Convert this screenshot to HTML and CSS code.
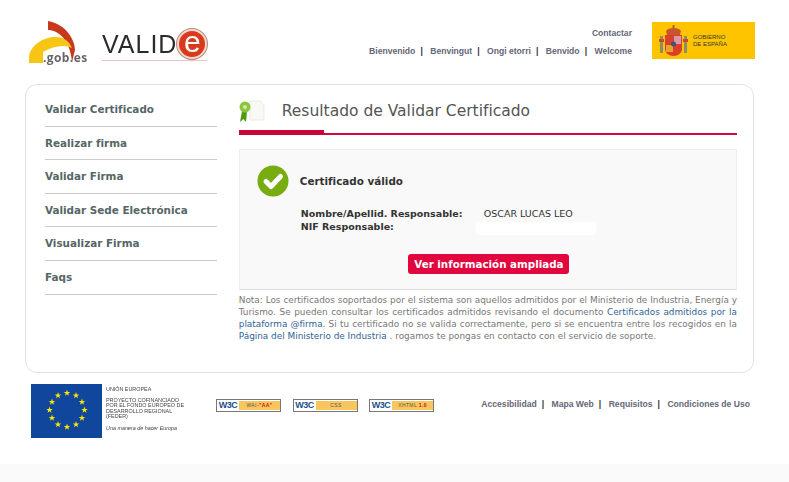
FILE: index.html

```html
<!DOCTYPE html>
<html lang="es">
<head>
  <meta charset="UTF-8" />
  <meta name="viewport" content="width=device-width, initial-scale=1.0" />
  <title>VALIDe</title>
  <link rel="stylesheet" href="styles.css">
</head>
<body>
  <div class="header">
    <div class="logos">
      <div class="gob-logo">
        <svg class="gob-mark" width="48" height="46" viewBox="0 0 48 46">
          <path d="M19 1 C37 4 46 20 46 30 L43 42 C42 28 35 11 19 10 Z" fill="#c8391b"/>
          <path d="M0 43 V36 C2 25 14 17 27 17 C35 17 40 21 43 28 C36 24 24 26 14 32 L14 43 Z" fill="#f7c615"/>
        </svg>
        <span class="gob-text">.gob.es</span>
      </div>
      <div class="valide-logo">
        <span class="valide-text">VALID</span>
        <span class="valide-e">e</span>
      </div>
    </div>
    <div class="lang-links">
      <div class="lang-row"><a href="#">Contactar</a></div>
      <div class="lang-row">
        <a href="#">Bienvenido</a><span class="sep">|</span>
        <a href="#">Benvingut</a><span class="sep">|</span>
        <a href="#">Ongi etorri</a><span class="sep">|</span>
        <a href="#">Benvido</a><span class="sep">|</span>
        <a href="#">Welcome</a>
      </div>
    </div>
    <div class="gobierno">
      <svg width="30" height="32" viewBox="0 0 30 32">
        <rect x="1" y="11" width="3" height="17" fill="#8a8f6a"/>
        <rect x="25" y="11" width="3" height="17" fill="#8a8f6a"/>
        <rect x="0" y="14" width="5" height="3" fill="#d2452d"/>
        <rect x="24" y="14" width="5" height="3" fill="#d2452d"/>
        <path d="M7 6 C9 2 20 2 22 6 L21 10 H8 Z" fill="#c9552c"/>
        <rect x="13.5" y="0" width="2" height="4" fill="#a8642a"/>
        <path d="M6 10 H23 V24 C23 28 19 31 14.5 31 C10 31 6 28 6 24 Z" fill="#d8402a"/>
        <rect x="15" y="11" width="7" height="8" fill="#d79aa8"/>
        <rect x="7" y="20" width="7" height="7" fill="#e8a12c"/>
        <circle cx="14.5" cy="19" r="2.5" fill="#44507a"/>
      </svg>
      <div class="gobierno-text">GOBIERNO<br>DE ESPAÑA</div>
    </div>
  </div>

  <div class="main-box">
    <ul class="side-menu">
      <li><a href="#">Validar Certificado</a></li>
      <li><a href="#">Realizar firma</a></li>
      <li><a href="#">Validar Firma</a></li>
      <li><a href="#">Validar Sede Electrónica</a></li>
      <li><a href="#">Visualizar Firma</a></li>
      <li><a href="#">Faqs</a></li>
    </ul>

    <div class="content">
      <div class="title-row">
        <svg width="26" height="23" viewBox="0 0 26 23">
          <path d="M11 1 H21 L25 5 V20 H11 Z" fill="#f8f8f4" stroke="#ebebe4" stroke-width="1"/>
          <path d="M3 11 L1 22 L4.500 19 L7 22 L8 11 Z" fill="#4f9a12"/>
          <circle cx="6" cy="7" r="5.500" fill="#8cc63f"/>
          <circle cx="6" cy="7" r="2" fill="#d5eaa6"/>
        </svg>
        <h1>Resultado de Validar Certificado</h1>
      </div>
      <div class="title-rule"><span class="title-tab"></span></div>

      <div class="panel">
        <div class="status">
          <svg width="32" height="32" viewBox="0 0 32 32">
            <circle cx="16" cy="16" r="15.500" fill="#77ad10"/>
            <path d="M9 16.500 L14 21.500 L23.500 11.500" fill="none" stroke="#fff" stroke-width="5" stroke-linejoin="round" stroke-linecap="round"/>
          </svg>
          <strong>Certificado válido</strong>
        </div>
        <div class="data-grid">
          <span class="data-label">Nombre/Apellid. Responsable:</span><span class="data-value">OSCAR LUCAS LEO</span>
          <span class="data-label">NIF Responsable:</span><span class="data-value"><span class="redacted"></span></span>
        </div>
        <div class="actions">
          <button class="more-btn">Ver información ampliada</button>
        </div>
      </div>

      <p class="note">Nota: Los certificados soportados por el sistema son aquellos admitidos por el Ministerio de Industria, Energía y Turismo. Se pueden consultar los certificados admitidos revisando el documento <a href="#">Certificados admitidos por la plataforma @firma.</a> Si tu certificado no se valida correctamente, pero si se encuentra entre los recogidos en la <a href="#">Página del Ministerio de Industria</a> . rogamos te pongas en contacto con el servicio de soporte.</p>
    </div>
  </div>

  <div class="footer">
    <div class="eu-block">
      <svg class="eu-flag" width="71" height="54" viewBox="0 0 71 54">
        <defs>
          <polygon id="eu-star" points="0,-3.400 0.800,-1.100 3.200,-1.050 1.300,0.400 2,2.750 0,1.350 -2,2.750 -1.300,0.400 -3.200,-1.050 -0.800,-1.100" fill="#ffe600"/>
        </defs>
        <rect width="71" height="54" fill="#10479c"/>
        <use href="#eu-star" x="36" y="9"/>
        <use href="#eu-star" x="27" y="11.500"/>
        <use href="#eu-star" x="45" y="11.500"/>
        <use href="#eu-star" x="21" y="18"/>
        <use href="#eu-star" x="51" y="18"/>
        <use href="#eu-star" x="18.500" y="26"/>
        <use href="#eu-star" x="53.500" y="26"/>
        <use href="#eu-star" x="21" y="34"/>
        <use href="#eu-star" x="51" y="34"/>
        <use href="#eu-star" x="27" y="40.500"/>
        <use href="#eu-star" x="45" y="40.500"/>
        <use href="#eu-star" x="36" y="43"/>
      </svg>
      <div class="eu-text">
        <div class="eu-head">UNIÓN EUROPEA</div>
        <div class="eu-project">PROYECTO COFINANCIADO<br>POR EL FONDO EUROPEO DE<br>DESARROLLO REGIONAL<br>(FEDER)</div>
        <div class="eu-motto">Una manera de hacer Europa</div>
      </div>
    </div>
    <div class="badges">
      <div class="badge"><span class="w3c">W3C</span><span class="badge-tag">WAI-<b>"AA"</b></span></div>
      <div class="badge"><span class="w3c">W3C</span><span class="badge-tag">CSS</span></div>
      <div class="badge"><span class="w3c">W3C</span><span class="badge-tag">XHTML <b>1.0</b></span></div>
    </div>
    <div class="foot-links">
      <a href="#">Accesibilidad</a><span class="sep">|</span>
      <a href="#">Mapa Web</a><span class="sep">|</span>
      <a href="#">Requisitos</a><span class="sep">|</span>
      <a href="#">Condiciones de Uso</a>
    </div>
  </div>
  <div class="bottom-band"></div>
</body>
</html>
```

FILE: styles.css

```css
html, body {
  margin: 0;
  padding: 0;
}
body {
  font-family: "DejaVu Sans", sans-serif;
  background-color: #fff;
  color: #555;
  height: 482px;
  overflow: hidden;
  display: flex;
  flex-direction: column;
}
a {
  text-decoration: none;
  color: inherit;
}

/* header */
.header {
  display: flex;
  height: 84px;
  box-sizing: border-box;
  padding: 22px 34px 0 29px;
}
.logos {
  display: flex;
  align-items: flex-start;
  filter: blur(0.4px);
}
.gob-logo {
  position: relative;
  width: 60px;
  height: 46px;
}
.gob-mark {
  margin-top: -2px;
}
.gob-text {
  position: absolute;
  left: 14px;
  top: 27px;
  font: bold 12px "Open Sans", sans-serif;
  letter-spacing: 0.4px;
  color: #666;
}
.valide-logo {
  display: flex;
  align-items: center;
  margin: 6px 0 0 13px;
  height: 32px;
  border-bottom: 1px solid #e3c6bf;
}
.valide-text {
  font: 400 25px "Liberation Sans", sans-serif;
  letter-spacing: 1px;
  color: #2b2b2b;
}
.valide-e {
  width: 26px;
  height: 26px;
  border-radius: 50%;
  background-color: #d9391c;
  border: 2px solid #f3d9d0;
  box-shadow: 0 0 0 1px #b9897c;
  color: #fff;
  font: 400 30px/21px "Liberation Sans", sans-serif;
  text-align: center;
}
.lang-links {
  margin-left: auto;
  font: bold 8.6px "Liberation Sans", sans-serif;
  color: #667;
  text-align: right;
  padding-top: 6px;
}
.lang-row {
  height: 18px;
  line-height: 11px;
}
.sep {
  color: #333;
  margin: 0 5px 0 5px;
}
.gobierno {
  display: flex;
  align-items: center;
  gap: 4px;
  width: 103px;
  height: 37px;
  box-sizing: border-box;
  margin-left: 20px;
  padding: 0 0 0 7px;
  background-color: #ffc400;
}
.gobierno-text {
  font: 6px/7px "Liberation Sans", sans-serif;
  color: #333;
}

/* main box */
.main-box {
  display: flex;
  width: 729px;
  height: 289px;
  box-sizing: border-box;
  margin-left: 25px;
  padding: 8px 16px 0 19px;
  border: 1.5px solid #e2e2e2;
  border-radius: 12px;
}
.side-menu {
  list-style: none;
  margin: 0;
  padding: 0;
  width: 172px;
}
.side-menu li {
  height: 33.6px;
  box-sizing: border-box;
  border-bottom: 1px solid #ccc;
  font-size: 10.4px;
  font-weight: bold;
  line-height: 33px;
  color: #566;
}
.content {
  width: 499px;
  margin-left: 22px;
}
.title-row {
  display: flex;
  align-items: center;
  gap: 17px;
  height: 32px;
  margin-top: 2px;
}
.title-row h1 {
  margin: 0;
  font-size: 15.5px;
  font-weight: normal;
  color: #555;
}
.title-rule {
  height: 2px;
  margin-top: 6px;
  background-color: #d5073f;
  position: relative;
}
.title-tab {
  position: absolute;
  left: 0;
  bottom: 0;
  width: 85px;
  height: 5px;
  background-color: #c8063a;
}
.panel {
  height: 141px;
  box-sizing: border-box;
  margin-top: 14px;
  padding: 15px 0 0 17px;
  background-color: #f9f9f9;
  border: 1px solid #eee;
  border-bottom-color: #ddd;
}
.status {
  display: flex;
  align-items: center;
  gap: 11px;
  font-size: 10.4px;
  color: #333;
}
.data-grid {
  display: grid;
  grid-template-columns: 183px auto;
  margin: 11px 0 0 44px;
  font-size: 9.5px;
  line-height: 12.5px;
  color: #333;
}
.data-label {
  font-weight: bold;
}
.data-value {
  position: relative;
}
.redacted {
  position: absolute;
  left: -9px;
  top: 1px;
  width: 122px;
  height: 13px;
  border-radius: 6px;
  background-color: #fff;
}
.actions {
  display: flex;
  justify-content: center;
  margin-top: 21px;
  padding-right: 15px;
}
.more-btn {
  width: 161px;
  height: 20px;
  padding: 0;
  border: none;
  border-radius: 3px;
  background-color: #e2063f;
  color: #fff;
  font: bold 10.3px "DejaVu Sans", sans-serif;
  cursor: pointer;
}
.note {
  margin: 4px 0 0 0;
  font-size: 8.9px;
  line-height: 12px;
  text-align: justify;
  color: #777;
}
.note a {
  color: #2f6496;
}

/* footer */
.footer {
  display: flex;
  align-items: flex-start;
  padding: 11px 39px 0 31px;
  height: 91px;
  box-sizing: border-box;
}
.eu-block {
  display: flex;
  gap: 4px;
  width: 185px;
  filter: blur(0.3px);
}
.eu-text {
  color: #444;
  font: 5.4px/5.5px "Liberation Sans", sans-serif;
  padding-top: 3px;
}
.eu-project {
  margin-top: 5px;
}
.eu-motto {
  margin-top: 6px;
  font-style: italic;
}
.badges {
  display: flex;
  gap: 11.5px;
  margin-top: 15px;
}
.badge {
  display: flex;
  width: 65px;
  height: 13px;
  box-sizing: border-box;
  border: 1px solid #777;
  background-color: #fff;
  font: 5px/11px "Liberation Sans", sans-serif;
}
.w3c {
  width: 22px;
  text-align: center;
  font: bold 9px/11px "Liberation Sans", sans-serif;
  letter-spacing: -0.5px;
  color: #24508c;
}
.badge-tag {
  flex: 1;
  margin: 1px 0;
  line-height: 9px;
  text-align: center;
  letter-spacing: 0.4px;
  background-color: #f8c65c;
  color: #555;
}
.badge-tag b {
  color: #d01010;
}
.foot-links {
  margin-left: auto;
  margin-top: 14px;
  font: bold 8.6px/12px "Liberation Sans", sans-serif;
  color: #667;
}
.bottom-band {
  flex: 1;
  background-color: #fafafa;
}
```
